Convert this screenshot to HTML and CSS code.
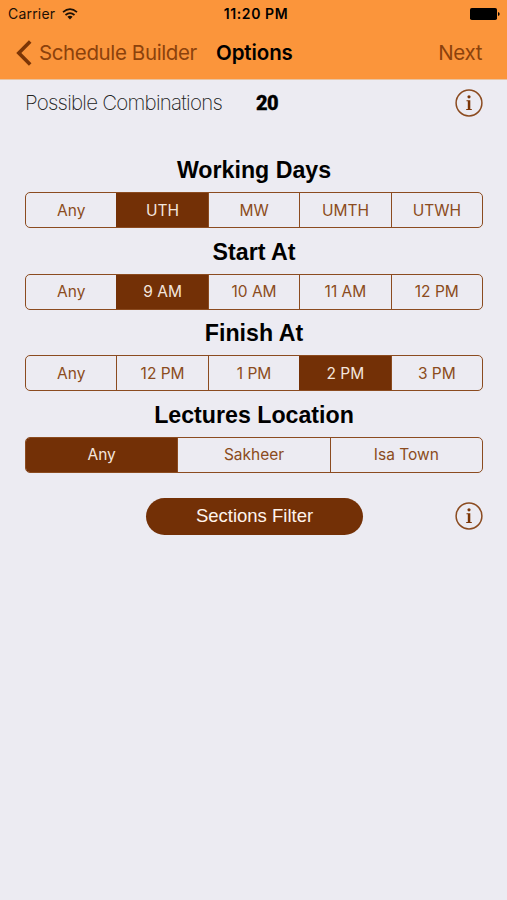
FILE: index.html
```html
<!DOCTYPE html>
<html lang="en">
<head>
<meta charset="utf-8">
<title>Options</title>
<link rel="stylesheet" href="styles.css">
</head>
<body>
<header class="header">
  <div class="status">
    <div class="carrier"><span>Carrier</span>
      <svg class="wifi" width="16" height="12" viewBox="0 0 16 12" fill="none" stroke="#1c1005" stroke-width="1.7"><path d="M1 4.2Q8-1.8 15 4.2M3.5 7Q8 3.1 12.5 7"/><path d="M5.4 8.8Q8 6.7 10.6 8.8L8 11.5Z" fill="#1c1005" stroke="none"/></svg>
    </div>
    <div class="time">11:20 PM</div>
    <svg class="battery" width="30" height="12" viewBox="0 0 30 12"><rect width="27" height="12" rx="1.8"/><path d="M28 4Q29.7 4.4 29.7 6T28 8Z"/></svg>
  </div>
  <nav class="nav">
    <a class="back"><svg width="16" height="26" viewBox="0 0 16 26" fill="none" stroke="#7b3506" stroke-width="3.6"><path d="M14.2 1.5L2.8 13L14.2 24.5"/></svg><span>Schedule Builder</span></a>
    <h1 class="title">Options</h1>
    <a class="next">Next</a>
  </nav>
</header>
<main class="content">
  <div class="summary">
    <span class="label">Possible Combinations</span>
    <span class="count">20</span>
    <svg class="info" width="28" height="28" viewBox="0 0 28 28"><circle cx="14" cy="14" r="12.9"/><path d="M11.5 11.2H15.3V20H16.8V21H11.2V20H12.8V12.2H11.5Z"/><circle class="dot" cx="14" cy="7.8" r="1.6"/></svg>
  </div>
  <section class="group"><h2>Working Days</h2>
    <div class="segments"><span>Any</span><span class="on">UTH</span><span>MW</span><span>UMTH</span><span>UTWH</span></div></section>
  <section class="group"><h2>Start At</h2>
    <div class="segments"><span>Any</span><span class="on">9 AM</span><span>10 AM</span><span>11 AM</span><span>12 PM</span></div></section>
  <section class="group"><h2>Finish At</h2>
    <div class="segments"><span>Any</span><span>12 PM</span><span>1 PM</span><span class="on">2 PM</span><span>3 PM</span></div></section>
  <section class="group"><h2>Lectures Location</h2>
    <div class="segments"><span class="on">Any</span><span>Sakheer</span><span>Isa Town</span></div></section>
  <div class="actions">
    <button class="filter">Sections Filter</button>
    <svg class="info" width="28" height="28" viewBox="0 0 28 28"><circle cx="14" cy="14" r="12.9"/><path d="M11.5 11.2H15.3V20H16.8V21H11.2V20H12.8V12.2H11.5Z"/><circle class="dot" cx="14" cy="7.8" r="1.6"/></svg>
  </div>
</main>
</body>
</html>
```
FILE: styles.css
```css
* { box-sizing: border-box; }
body {
  margin: 0;
  height: 900px;
  background: #ecebf2;
  font-family: Inter, "Liberation Sans", sans-serif;
  color: #000;
  white-space: nowrap;
}
.header { height: 80px; background: #fb953b; border-bottom: 1px solid #e9c3a0; }
.status {
  display: grid;
  grid-template-columns: 1fr auto 1fr;
  align-items: center;
  height: 27px;
  padding: 0 7px 0 8px;
  font-size: 14px;
}
.carrier { display: flex; align-items: center; gap: 7px; color: #1c1005; letter-spacing: 0.2px; }
.time { font-weight: 600; font-size: 14px; letter-spacing: 0.6px; font-kerning: none; padding-left: 4px; }
.battery { justify-self: end; }
.nav { display: flex; align-items: center; height: 51px; padding: 0 25px 0 16px; font-size: 20.5px; color: #8c420c; letter-spacing: -0.38px; }
.back { display: flex; align-items: center; gap: 7px; width: 200px; }
.title { margin: 0; font-size: 20.5px; font-weight: 600; color: #000; letter-spacing: -0.1px; }
.next { margin-left: auto; }
.content { padding: 0 24px 0 25px; }
.summary { display: flex; align-items: center; height: 45px; margin-bottom: 31px; }
.label { width: 231px; font-size: 20.5px; font-weight: 200; letter-spacing: -0.77px; color: #222; }
.count { font-family: Roboto, "Liberation Sans", sans-serif; font-size: 20px; font-weight: 900; letter-spacing: -0.5px; -webkit-text-stroke: 0.3px #000; }
.info { margin-left: auto; fill: #7b3506; }
.info circle { fill: none; stroke: #8b4b20; stroke-width: 1.5; }
.info .dot { fill: #7b3506; stroke: none; }
.group { height: 81.5px; }
h2 {
  margin: 0;
  height: 36px;
  text-align: center;
  font: 700 23.2px/28.6px "Liberation Sans", sans-serif;
}
.segments {
  display: flex;
  height: 36px;
  width: 458px;
  border: 1.5px solid #8b4b20;
  border-radius: 5px;
  overflow: hidden;
}
.segments span {
  flex: 1 1 0;
  display: flex;
  align-items: center;
  justify-content: center;
  border-left: 1px solid #8b4b20;
  font-size: 15.5px;
  color: #8b4b20;
}
.segments span:first-child { border-left: 0; }
.segments .on { background: #733006; color: #f3e5dc; border-color: #733006; }
.actions { display: flex; align-items: center; margin-top: 15px; height: 38px; }
.filter {
  margin-left: 121px;
  width: 217px;
  height: 37px;
  padding: 0;
  border: 0;
  border-radius: 19px;
  background: #733006;
  color: #fff4ec;
  font: 400 18.5px "Liberation Sans", sans-serif;
}
```
